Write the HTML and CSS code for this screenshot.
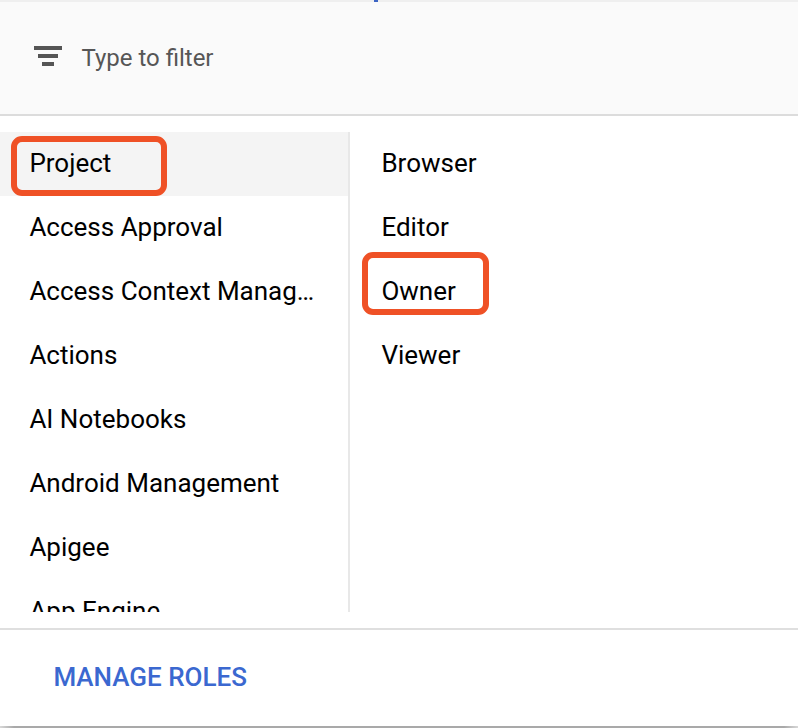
FILE: index.html
```html
<!DOCTYPE html>
<html lang="en">
<head>
<meta charset="utf-8">
<title>Select a role</title>
<link rel="stylesheet" href="styles.css">
</head>
<body>
<main class="panel">
  <header class="filter">
    <svg class="filter-icon" width="28" height="20" viewBox="0 0 28 20" aria-hidden="true"><path d="M0 0h28v4H0zM4 8h20v4H4zM8 16h12v4H8z"/></svg>
    <span class="filter-text">Type to filter</span>
  </header>
  <div class="columns">
    <ul class="list categories">
      <li class="item selected"><span class="label">Project</span></li>
      <li class="item"><span class="label">Access Approval</span></li>
      <li class="item"><span class="label">Access Context Manag…</span></li>
      <li class="item"><span class="label">Actions</span></li>
      <li class="item"><span class="label">AI Notebooks</span></li>
      <li class="item"><span class="label">Android Management</span></li>
      <li class="item"><span class="label">Apigee</span></li>
      <li class="item"><span class="label">App Engine</span></li>
    </ul>
    <ul class="list roles">
      <li class="item">Browser</li>
      <li class="item">Editor</li>
      <li class="item owner">Owner</li>
      <li class="item">Viewer</li>
    </ul>
  </div>
  <footer class="footer"><span class="manage">MANAGE ROLES</span></footer>
</main>
</body>
</html>
```

FILE: styles.css
```css
*, *::before, *::after { box-sizing: border-box; }
body {
  margin: 0;
  background: #fff;
  color: #000;
  font-family: Roboto, sans-serif;
  font-size: 26px;
}
.panel {
  position: relative;
  display: flex;
  flex-direction: column;
  height: 728px;
  overflow: hidden;
}
.panel::before {
  content: "";
  position: absolute;
  left: 374px;
  top: 0;
  width: 4px;
  height: 2px;
  background: #3c64c4;
}
.panel::after {
  content: "";
  position: absolute;
  left: 0;
  right: 0;
  bottom: 0;
  height: 2px;
  background: linear-gradient(90deg, #d8d8d8, #a9a9a9 14px, #a9a9a9 calc(100% - 14px), #d8d8d8);
}
.filter {
  display: flex;
  align-items: flex-start;
  gap: 20px;
  height: 116px;
  padding: 44px 34px 0;
  background: #fafafa;
  border-top: 2px solid #efefef;
  border-bottom: 2px solid #dcdcdc;
}
.filter-icon { fill: #555; }
.filter-text { margin-left: -0.6px; color: #565656; font-size: 24px; line-height: 24px; }
.columns {
  display: flex;
  height: 480px;
  margin: 16px 0;
  overflow: hidden;
}
.list { margin: 0; padding: 0; list-style: none; }
.categories { width: 350px; border-right: 2px solid #e8e8e8; }
.roles { flex: 1; }
.item {
  position: relative;
  height: 64px;
  padding-left: 31.4px;
  line-height: 62px;
}
.categories .item { padding: 0 24px 0 29.4px; }
.label { display: block; white-space: nowrap; }
.selected { background: #f4f4f4; }
.selected::after, .owner::after {
  content: "";
  position: absolute;
  border: 6px solid #ef5126;
  border-radius: 11px;
}
.selected::after { left: 11.4px; top: 3.6px; width: 155.2px; height: 60.4px; }
.owner::after { left: 12px; top: -8px; width: 127.4px; height: 63.4px; }
.footer {
  display: flex;
  align-items: center;
  flex: 1;
  padding: 0 53.4px 4px;
  border-top: 2px solid #dfdfdf;
}
.manage { color: #3b68d0; font-weight: 500; }
```
